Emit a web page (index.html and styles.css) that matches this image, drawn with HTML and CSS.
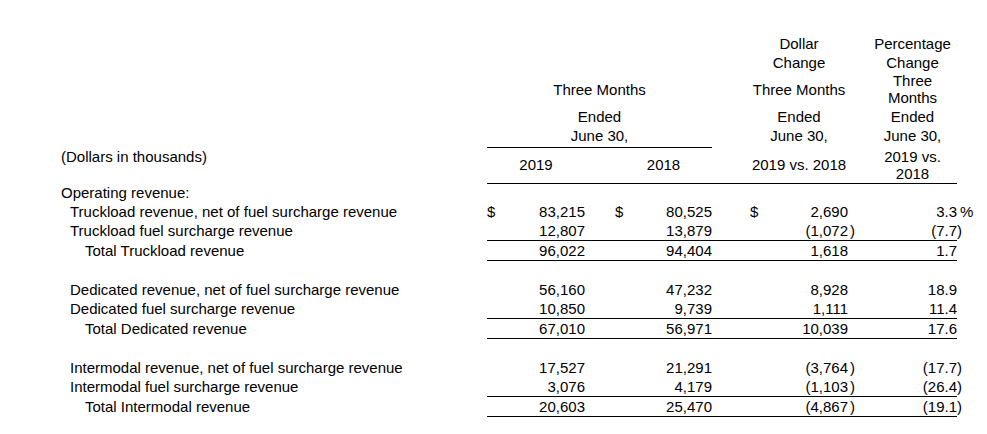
FILE: index.html
```html
<!DOCTYPE html>
<html>
<head>
<meta charset="utf-8">
<link rel="stylesheet" href="styles.css">
</head>
<body>
<div class="page">
<table class="fin">
  <colgroup>
    <col class="c-label"><col class="c-cur"><col class="c-num"><col class="c-gap1"><col class="c-cur"><col class="c-num2"><col class="c-gap2"><col class="c-cur"><col class="c-num"><col class="c-par"><col class="c-gap3"><col class="c-pct"><col class="c-suf">
  </colgroup>
  <thead>
    <tr class="h-a">
      <td></td>
      <td colspan="6"></td>
      <td colspan="2" class="hc">Dollar<br>Change</td>
      <td></td><td></td>
      <td class="hc">Percentage<br>Change</td>
      <td></td>
    </tr>
    <tr class="h-b">
      <td></td>
      <td colspan="5" class="hc">Three Months</td>
      <td></td>
      <td colspan="2" class="hc">Three Months</td>
      <td></td><td></td>
      <td class="hc tight">Three Months</td>
      <td></td>
    </tr>
    <tr class="h-c">
      <td></td>
      <td colspan="5" class="hc rule">Ended<br>June 30,</td>
      <td></td>
      <td colspan="2" class="hc">Ended<br>June 30,</td>
      <td></td><td></td>
      <td class="hc">Ended<br>June 30,</td>
      <td></td>
    </tr>
    <tr class="h-d">
      <td class="unit">(Dollars in thousands)</td>
      <td colspan="2" class="hc rule">2019</td>
      <td class="rule"></td>
      <td colspan="2" class="hc rule">2018</td>
      <td class="rule"></td>
      <td colspan="2" class="hc rule">2019 vs. 2018</td>
      <td class="rule"></td><td class="rule"></td>
      <td class="hc tight rule">2019 vs. 2018</td>
      <td></td>
    </tr>
  </thead>
  <tbody>
    <tr>
      <td class="lbl">Operating revenue:</td>
      <td></td><td></td><td></td><td></td><td></td><td></td><td></td><td></td><td></td><td></td><td></td><td></td>
    </tr>
    <tr>
      <td class="lbl in1">Truckload revenue, net of fuel surcharge revenue</td>
      <td class="cur">$</td><td class="num">83,215</td><td></td>
      <td class="cur">$</td><td class="num">80,525</td><td></td>
      <td class="cur">$</td><td class="num">2,690</td><td class="par"></td><td></td>
      <td class="num">3.3</td><td class="suf"><span class="pc">%</span></td>
    </tr>
    <tr class="sub">
      <td class="lbl in1">Truckload fuel surcharge revenue</td>
      <td></td><td class="num">12,807</td><td></td>
      <td></td><td class="num">13,879</td><td></td>
      <td></td><td class="num">(1,072</td><td class="par">)</td><td></td>
      <td class="num">(7.7</td><td class="suf">)</td>
    </tr>
    <tr class="sub">
      <td class="lbl in2">Total Truckload revenue</td>
      <td></td><td class="num">96,022</td><td></td>
      <td></td><td class="num">94,404</td><td></td>
      <td></td><td class="num">1,618</td><td class="par"></td><td></td>
      <td class="num">1.7</td><td class="suf"></td>
    </tr>
    <tr class="spacer"><td colspan="13"></td></tr>
    <tr>
      <td class="lbl in1">Dedicated revenue, net of fuel surcharge revenue</td>
      <td></td><td class="num">56,160</td><td></td>
      <td></td><td class="num">47,232</td><td></td>
      <td></td><td class="num">8,928</td><td class="par"></td><td></td>
      <td class="num">18.9</td><td class="suf"></td>
    </tr>
    <tr class="sub">
      <td class="lbl in1">Dedicated fuel surcharge revenue</td>
      <td></td><td class="num">10,850</td><td></td>
      <td></td><td class="num">9,739</td><td></td>
      <td></td><td class="num">1,111</td><td class="par"></td><td></td>
      <td class="num">11.4</td><td class="suf"></td>
    </tr>
    <tr class="sub">
      <td class="lbl in2">Total Dedicated revenue</td>
      <td></td><td class="num">67,010</td><td></td>
      <td></td><td class="num">56,971</td><td></td>
      <td></td><td class="num">10,039</td><td class="par"></td><td></td>
      <td class="num">17.6</td><td class="suf"></td>
    </tr>
    <tr class="spacer"><td colspan="13"></td></tr>
    <tr>
      <td class="lbl in1">Intermodal revenue, net of fuel surcharge revenue</td>
      <td></td><td class="num">17,527</td><td></td>
      <td></td><td class="num">21,291</td><td></td>
      <td></td><td class="num">(3,764</td><td class="par">)</td><td></td>
      <td class="num">(17.7</td><td class="suf">)</td>
    </tr>
    <tr class="sub">
      <td class="lbl in1">Intermodal fuel surcharge revenue</td>
      <td></td><td class="num">3,076</td><td></td>
      <td></td><td class="num">4,179</td><td></td>
      <td></td><td class="num">(1,103</td><td class="par">)</td><td></td>
      <td class="num">(26.4</td><td class="suf">)</td>
    </tr>
    <tr class="sub">
      <td class="lbl in2">Total Intermodal revenue</td>
      <td></td><td class="num">20,603</td><td></td>
      <td></td><td class="num">25,470</td><td></td>
      <td></td><td class="num">(4,867</td><td class="par">)</td><td></td>
      <td class="num">(19.1</td><td class="suf">)</td>
    </tr>
  </tbody>
</table>
</div>
</body>
</html>
```

FILE: styles.css
```css
html, body {
  margin: 0;
  padding: 0;
  background: #ffffff;
}

.page {
  padding: 34px 0 0 61px;
}

.fin {
  border-collapse: collapse;
  table-layout: fixed;
  width: 911px;
  font-family: "Liberation Sans", Arial, sans-serif;
  font-size: 15px;
  line-height: 19px;
  color: #000000;
}

.fin td {
  padding: 0;
  white-space: nowrap;
  vertical-align: middle;
}

.c-label { width: 426px; }
.c-cur { width: 13px; }
.c-num { width: 85px; }
.c-num2 { width: 84px; }
.c-gap1 { width: 30px; }
.c-gap2 { width: 38px; }
.c-par { width: 8px; }
.c-gap3 { width: 12px; }
.c-pct { width: 89px; }
.c-suf { width: 15px; }

.fin td.hc {
  text-align: center;
  white-space: normal;
}

.fin td.tight {
  line-height: 17px;
}

.h-b td {
  padding-bottom: 1px;
}

.h-c td {
  padding-bottom: 2px;
}

.fin td.rule {
  border-bottom: 1px solid #000000;
}

.fin td.unit {
  vertical-align: top;
  line-height: 17px;
}

.h-d td {
  padding-bottom: 1px;
}

.fin td.num {
  text-align: right;
}

.fin td.par {
  text-align: left;
  padding-left: 2px;
}

.fin td.suf {
  text-align: left;
  padding-left: 0;
}

.pc {
  margin-left: 3px;
}

.fin td.cur {
  text-align: left;
}

.in1 { padding-left: 9px !important; }
.in2 { padding-left: 24px !important; }

.sub td:nth-child(n+2):nth-child(-n+12) {
  border-bottom: 1px solid #000000;
}

.spacer td {
  height: 19px;
}
```
